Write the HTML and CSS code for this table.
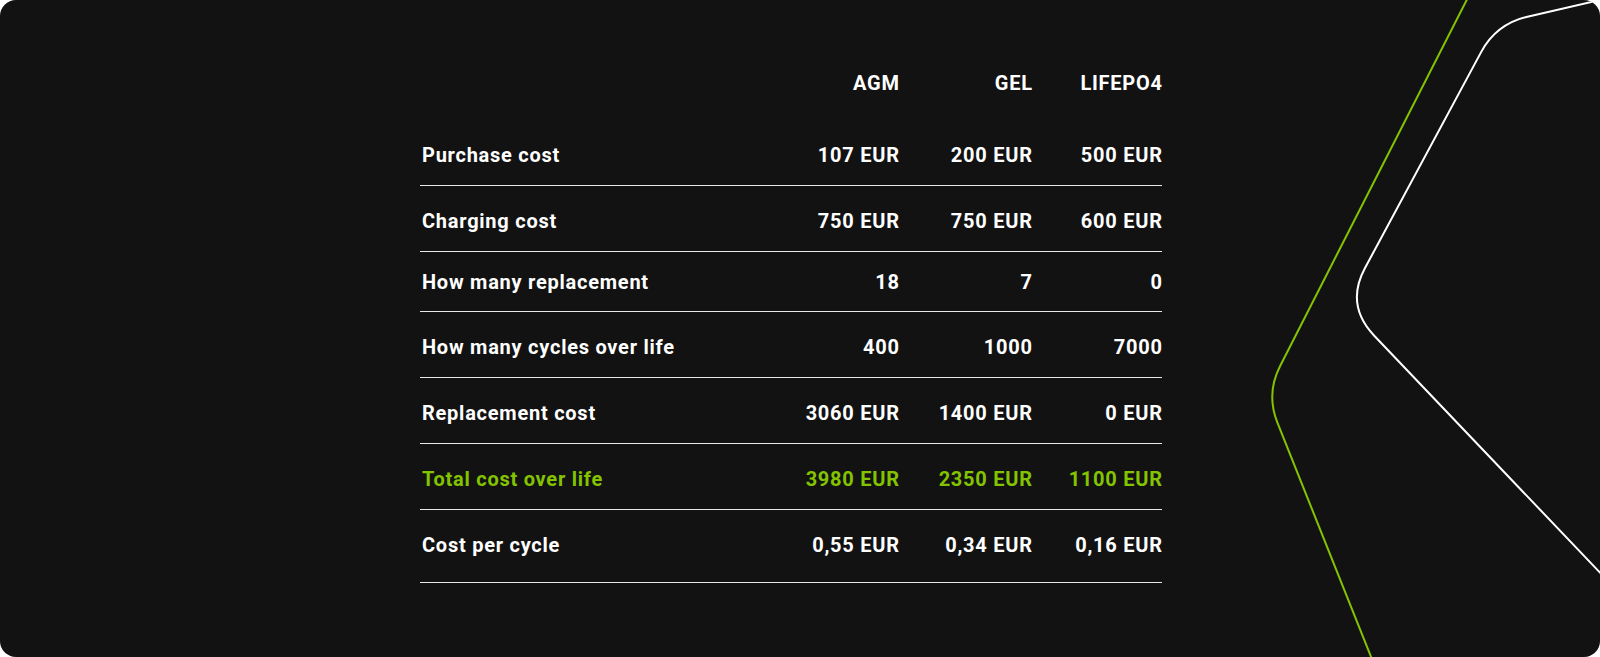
FILE: index.html
```html
<!DOCTYPE html>
<html lang="en">
<head>
<meta charset="utf-8">
<title>Battery cost comparison</title>
<link rel="stylesheet" href="styles.css">
</head>
<body>
<section class="card">
  <svg class="deco" viewBox="0 0 1600 657" width="1600" height="657" aria-hidden="true">
    <path class="deco-green" d="M1471.8 -10 L1280 366.2 Q1265.9 393.8 1277.4 422.6 L1376.3 670"/>
    <path class="deco-white" d="M1620 -4.6 L1527.5 16.7 Q1496.3 23.9 1481.1 52.1 L1365 268 Q1345.1 305 1374 335.5 L1690 667"/>
  </svg>
  <div class="table">
    <div class="row row-head">
      <div class="cell label"></div>
      <div class="cell">AGM</div>
      <div class="cell">GEL</div>
      <div class="cell">LIFEPO4</div>
    </div>
    <div class="row">
      <div class="cell label">Purchase cost</div>
      <div class="cell">107 EUR</div>
      <div class="cell">200 EUR</div>
      <div class="cell">500 EUR</div>
    </div>
    <div class="row">
      <div class="cell label">Charging cost</div>
      <div class="cell">750 EUR</div>
      <div class="cell">750 EUR</div>
      <div class="cell">600 EUR</div>
    </div>
    <div class="row row-tight">
      <div class="cell label">How many replacement</div>
      <div class="cell">18</div>
      <div class="cell">7</div>
      <div class="cell">0</div>
    </div>
    <div class="row">
      <div class="cell label">How many cycles over life</div>
      <div class="cell">400</div>
      <div class="cell">1000</div>
      <div class="cell">7000</div>
    </div>
    <div class="row">
      <div class="cell label">Replacement cost</div>
      <div class="cell">3060 EUR</div>
      <div class="cell">1400 EUR</div>
      <div class="cell">0 EUR</div>
    </div>
    <div class="row row-total">
      <div class="cell label">Total cost over life</div>
      <div class="cell">3980 EUR</div>
      <div class="cell">2350 EUR</div>
      <div class="cell">1100 EUR</div>
    </div>
    <div class="row row-last">
      <div class="cell label">Cost per cycle</div>
      <div class="cell">0,55 EUR</div>
      <div class="cell">0,34 EUR</div>
      <div class="cell">0,16 EUR</div>
    </div>
  </div>
</section>
</body>
</html>
```
FILE: styles.css
```css
html, body {
  margin: 0;
  padding: 0;
  background: #ffffff;
}

.card {
  position: relative;
  width: 1600px;
  height: 657px;
  box-sizing: border-box;
  background: #121212;
  border-radius: 16px;
  overflow: hidden;
  padding: 71px 0 0 420px;
  font-family: Roboto, "Liberation Sans", Arial, sans-serif;
  font-weight: 700;
  font-size: 20px;
  line-height: 24px;
  letter-spacing: 0.75px;
  color: #ffffff;
}

.deco {
  position: absolute;
  left: 0;
  top: 0;
  pointer-events: none;
}

.deco path {
  fill: none;
  stroke-width: 2;
}

.deco-green {
  stroke: #84c300;
}

.deco-white {
  stroke: #ffffff;
}

.table {
  position: relative;
  width: 742px;
}

.row {
  display: grid;
  grid-template-columns: 349px 130px 133px 130px;
  padding: 23px 0 18px;
  border-bottom: 1px solid #e8e8e8;
}

.row-head {
  padding: 0 0 25px;
  border-bottom: none;
}

.row-tight {
  padding-top: 18px;
  padding-bottom: 17px;
}

.row-last {
  padding-bottom: 25px;
}

.row-total {
  color: #84c300;
}

.cell {
  text-align: right;
  white-space: nowrap;
  margin-right: -0.75px;
}

.cell.label {
  text-align: left;
  padding-left: 2px;
  margin-right: 0;
}
```
